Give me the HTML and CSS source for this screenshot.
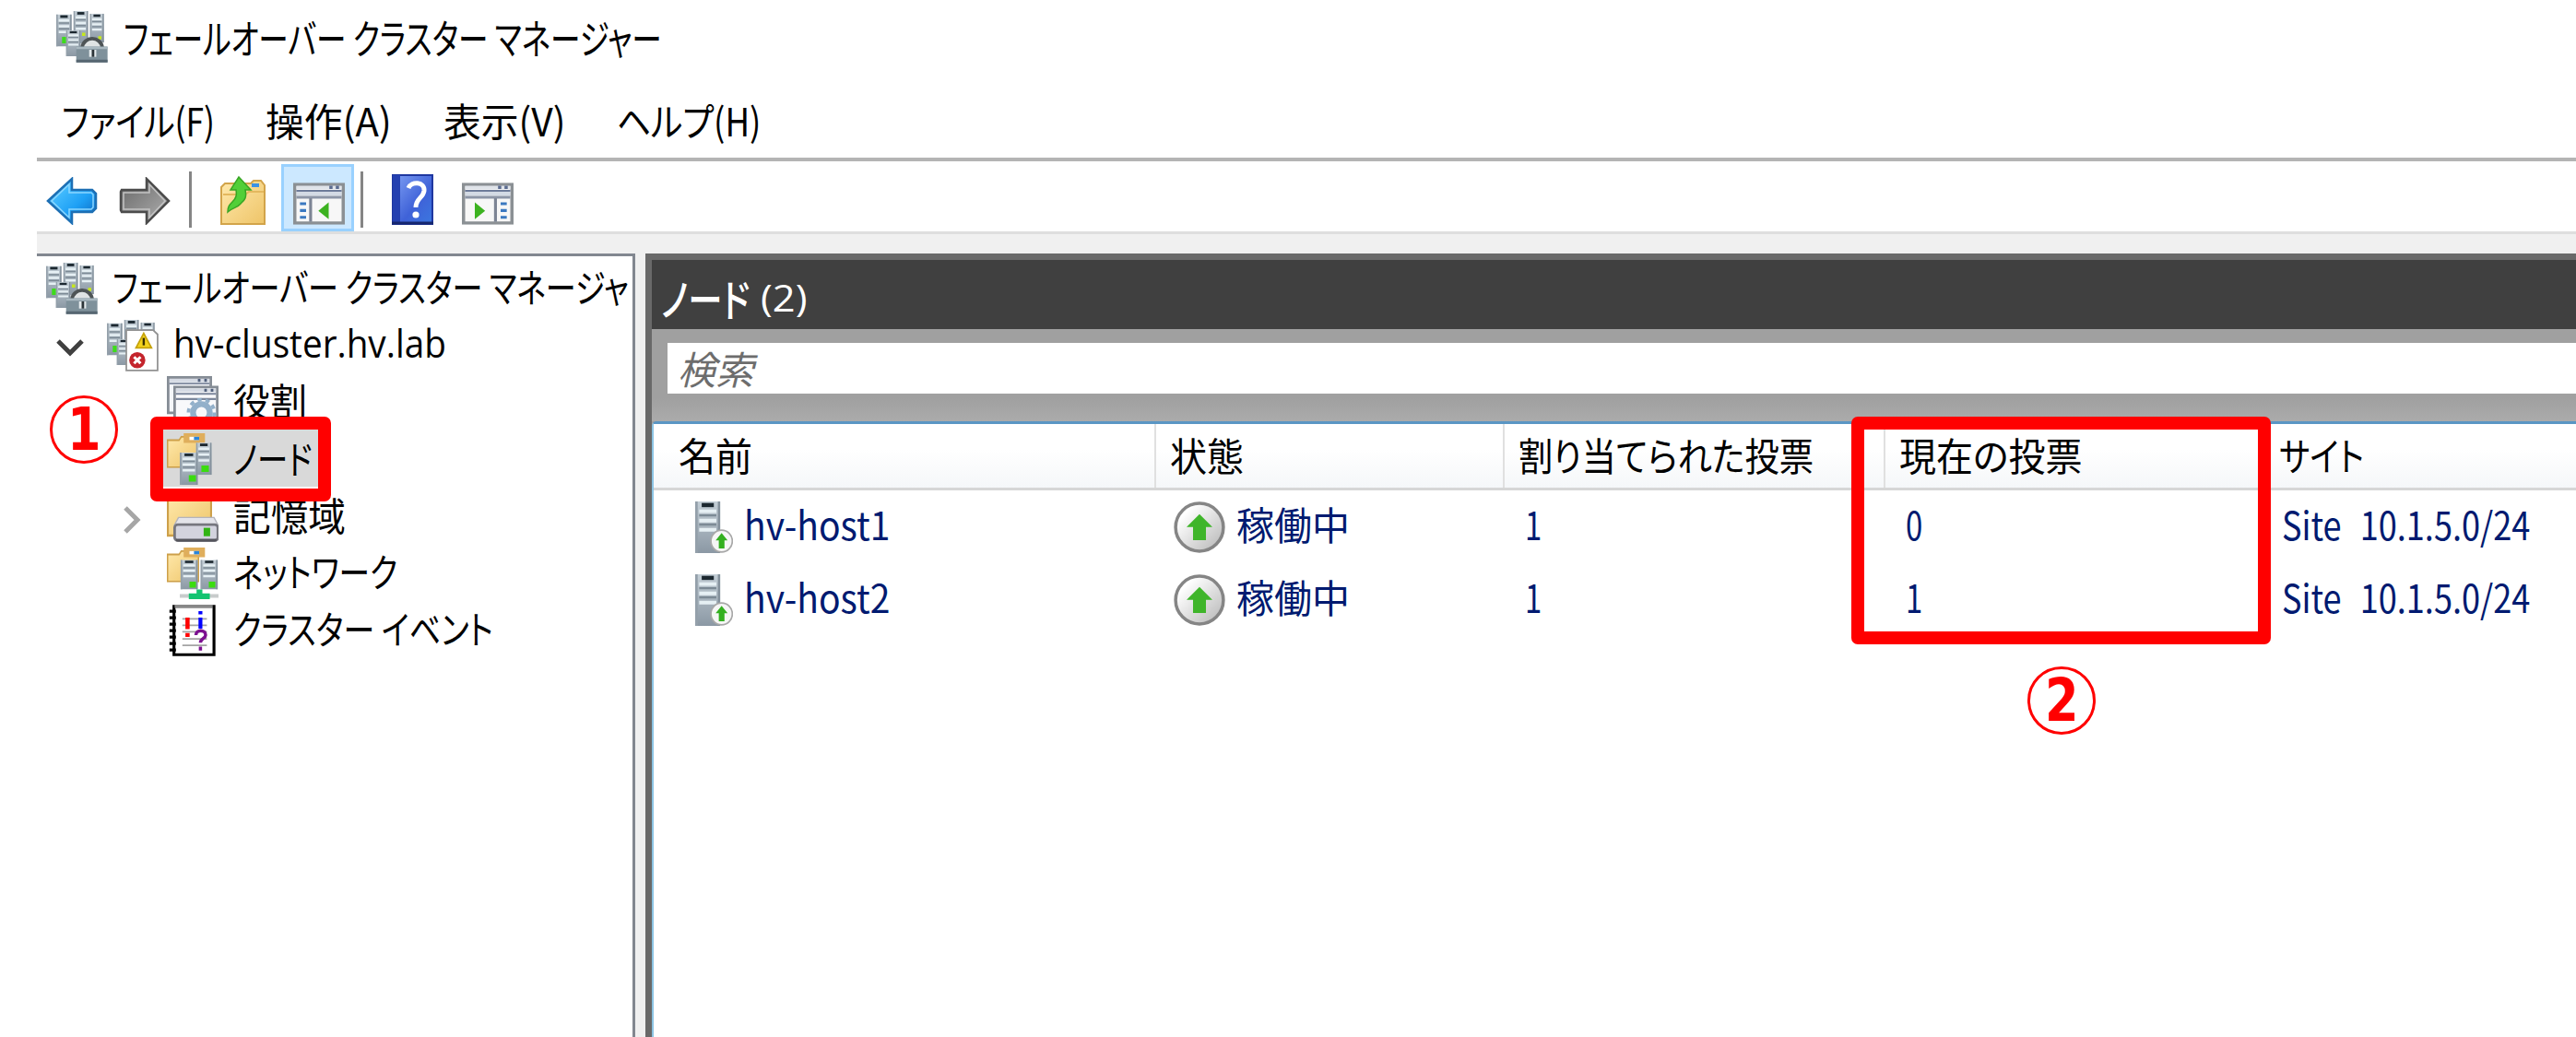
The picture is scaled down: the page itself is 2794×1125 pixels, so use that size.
FILE: index.html
```html
<!DOCTYPE html>
<html lang="ja">
<head>
    <meta charset="UTF-8">
    <title>フェールオーバー クラスター マネージャー</title>
    <link rel="stylesheet" href="styles.css">
</head>
<body>
    <!-- shared icon parts, 16x16 grid -->
    <svg class="sprite" aria-hidden="true">
        <defs>
            <linearGradient id="g-steel" x1="0" y1="0" x2="0" y2="1">
                <stop offset="0" stop-color="#c3ced6"/><stop offset="1" stop-color="#8b98a4"/>
            </linearGradient>
            <linearGradient id="g-folder" x1="0" y1="0" x2="1" y2="1">
                <stop offset="0" stop-color="#ffe9ac"/><stop offset="1" stop-color="#eec468"/>
            </linearGradient>
            <linearGradient id="g-blue" x1="0" y1="0" x2="1" y2="1">
                <stop offset="0.2" stop-color="#4cc2ff"/><stop offset="0.6" stop-color="#1ea0f5"/><stop offset="1" stop-color="#0a62b8"/>
            </linearGradient>
            <linearGradient id="g-grey" x1="0" y1="0" x2="1" y2="1">
                <stop offset="0" stop-color="#666"/><stop offset="1" stop-color="#b0b0b0"/>
            </linearGradient>
            <linearGradient id="g-book" x1="0" y1="0" x2="1" y2="1">
                <stop offset="0" stop-color="#7fa0f4"/><stop offset="0.6" stop-color="#3f62d8"/><stop offset="1" stop-color="#3b78e0"/>
            </linearGradient>
            <linearGradient id="g-disc" x1="0" y1="0" x2="1" y2="1">
                <stop offset="0.2" stop-color="#fff"/><stop offset="1" stop-color="#b4b4b4"/>
            </linearGradient>
        </defs>
        <symbol id="tower" viewBox="0 0 5 10" preserveAspectRatio="none">
            <rect width="5" height="10" fill="url(#g-steel)"/>
            <rect width="0.5" height="10" fill="#94a0aa"/>
            <rect x="4.5" width="0.5" height="10" fill="#84919c"/>
            <rect x="1.3" y="0.3" width="2.4" height="0.8" fill="#1c2830"/>
            <path d="M0.8 1.9h3.4M0.8 3.7h3.4M0.8 5.5h3.4" stroke="#e6f0f4" stroke-width="0.7"/>
            <path d="M0.8 2.7h3.4M0.8 4.5h3.4" stroke="#7c8a95" stroke-width="0.4"/>
        </symbol>
        <symbol id="folder" viewBox="0 0 14 11" preserveAspectRatio="none">
            <path d="M0.3 1.5h5L6.3 0.3h6l0.5 1.2h0.9v9.2H0.3z" fill="url(#g-folder)" stroke="#cda04a" stroke-width="0.6"/>
        </symbol>
        <symbol id="cluster" viewBox="0 0 16 16">
            <use href="#tower" x="0" y="1" width="4.8" height="10"/>
            <rect x="1.8" y="8" width="1.4" height="2" fill="#3ddc1a"/>
            <use href="#tower" x="5.3" y="0" width="4.6" height="10"/>
            <use href="#tower" x="10.4" y="0.8" width="4.4" height="9"/>
            <use href="#tower" x="3" y="6" width="4.6" height="8"/>
            <path d="M8 7.2h1M13 8.3h1" stroke="#c6e81c" stroke-width="1"/>
        </symbol>
        <symbol id="manager" viewBox="0 0 16 16">
            <use href="#cluster" width="16" height="16"/>
            <path d="M8 11.4c0.4-3.8 5.9-3.8 6.3 0" fill="#dfe3e4" stroke="#4e5456" stroke-width="1.1"/>
            <rect x="6.2" y="11" width="9.7" height="4.9" fill="#7f919b"/>
            <path d="M6.2 11.4h9.7" stroke="#a9b8c0" stroke-width="0.7"/>
            <path d="M6.2 15.5h9.7" stroke="#566671" stroke-width="0.8"/>
            <rect x="10.2" y="12" width="2.2" height="2.2" fill="#e6ecee"/>
            <rect x="11" y="12" width="0.8" height="2.2" fill="#2c3438"/>
        </symbol>
        <symbol id="cluster-alert" viewBox="0 0 16 16">
            <use href="#cluster" width="16" height="16"/>
            <path d="M6 3.2h8.3l1.4 1.3v11.2H6z" fill="#fff" stroke="#919191" stroke-width="0.5"/>
            <path d="M11.4 4.2l2.4 4.5H9z" fill="#f4d31c" stroke="#c5a20a" stroke-width="0.5"/>
            <path d="M11.4 5.6v2.3" stroke="#3a3000" stroke-width="0.7"/>
            <circle cx="9.4" cy="12.5" r="2.5" fill="#c4242c"/>
            <path d="M8.4 11.5l2 2m0-2l-2 2" stroke="#fff" stroke-width="0.9"/>
        </symbol>
        <symbol id="roles" viewBox="0 0 16 16">
            <rect x="0.4" y="0.4" width="13.2" height="11" fill="#f4f6f9" stroke="#868d96" stroke-width="0.8"/>
            <path d="M0.8 1.4h12.4" stroke="#d6dbe4" stroke-width="1.1"/>
            <path d="M0.8 2.3h12.4" stroke="#7c879c" stroke-width="0.5"/>
            <rect x="2.4" y="3.4" width="13.2" height="12.2" fill="#f8f9fb" stroke="#868d96" stroke-width="0.8"/>
            <path d="M2.8 4.4h12.4" stroke="#d6dbe4" stroke-width="1.1"/>
            <path d="M2.8 5.5h12.4M2.8 7.1h12.4" stroke="#7c879c" stroke-width="0.6"/>
            <path d="M9.6 1.3h0.8M11.6 1.3h0.8M11.6 4.4h0.8M13.6 4.4h0.8" stroke="#51607c" stroke-width="0.9"/>
            <circle cx="10.7" cy="11.3" r="2.6" fill="none" stroke="#92b0ca" stroke-width="1.8"/>
            <circle cx="10.7" cy="11.3" r="4" fill="none" stroke="#92b0ca" stroke-width="1.1" stroke-dasharray="1.3 1.2"/>
        </symbol>
        <symbol id="nodes" viewBox="0 0 16 16">
            <use href="#folder" x="0" y="0.8" width="10" height="10"/>
            <rect x="5.2" y="0" width="6.6" height="3" fill="#dfae5c"/>
            <path d="M7 1.6h3" stroke="#fff" stroke-width="1"/><path d="M8.4 1.6h1.6" stroke="#2a86dc" stroke-width="1"/>
            <use href="#tower" x="9" y="2.9" width="4.9" height="10"/>
            <rect x="10.7" y="10" width="2.3" height="2" fill="#3bdc10"/>
            <use href="#tower" x="4" y="6" width="5.6" height="10"/>
            <rect x="6.8" y="13" width="2.2" height="2" fill="#3bdc10"/>
        </symbol>
        <symbol id="storage" viewBox="0 0 16 16">
            <use href="#folder" x="0" y="1" width="14" height="13.4"/>
            <path d="M3.6 8.4h11l1.3 2.4H2.3z" fill="#e4e4ea" stroke="#b4b4bc" stroke-width="0.4"/>
            <rect x="2.4" y="10.6" width="13.4" height="5" rx="1" fill="#d3d3de" stroke="#77777f" stroke-width="0.8"/>
            <path d="M2.8 15.4h12.6" stroke="#55555c" stroke-width="0.8"/>
            <rect x="11.4" y="11.6" width="2" height="2.6" fill="#32b414"/>
        </symbol>
        <symbol id="network" viewBox="0 0 16 16">
            <use href="#folder" x="0" y="0.8" width="10" height="10"/>
            <rect x="5.2" y="0" width="6.6" height="3" fill="#dfae5c"/>
            <path d="M7 1.6h3" stroke="#fff" stroke-width="1"/><path d="M8.4 1.6h1.6" stroke="#2a86dc" stroke-width="1"/>
            <use href="#tower" x="4.2" y="3.8" width="5.4" height="9.2"/>
            <use href="#tower" x="10.4" y="3.8" width="5.4" height="9.2"/>
            <path d="M7 11.5h2M13 11.5h2" stroke="#3bdc10" stroke-width="1.8"/>
            <path d="M4 15h12" stroke="#c8cccc" stroke-width="1.2"/>
            <path d="M9.2 13h1.8v1.2h2.3V16H6.8v-1.8h2.4z" fill="#12c470"/>
        </symbol>
        <symbol id="events" viewBox="0 0 16 16">
            <path d="M2.2 0.5h12.4v15H2.2z" fill="#fff" stroke="#000" stroke-width="0.9"/>
            <path d="M2.4 0.5h11.8" stroke="#888" stroke-width="1"/>
            <path d="M1.8 1.6v13.4" stroke="#000" stroke-width="2" stroke-dasharray="0.9 1.1"/>
            <path d="M4.8 4.4h7.6M4.8 6.4h7.6M4.8 8.4h7.6M4.8 10.6h7.6M4.8 12.6h7.6" stroke="#a4a4a4" stroke-width="0.5"/>
            <path d="M6.4 4v3.6M6.4 8.8v1.2" stroke="#f00" stroke-width="1.3"/>
            <path d="M10.4 2v1M10.4 4v3.4" stroke="#00f" stroke-width="1.2"/>
            <path d="M9 9.4c0-1.8 3-1.8 3 0 0 1.1-1.6 1.1-1.6 2.4M10.4 13v1.2" fill="none" stroke="#7c1090" stroke-width="1"/>
        </symbol>
        <symbol id="server-up" viewBox="0 0 12 16" preserveAspectRatio="none">
            <use href="#tower" x="0" y="0" width="8" height="16"/>
            <circle cx="8.4" cy="12.3" r="3.4" fill="#f6f6f6" stroke="#a8a8a8" stroke-width="0.5"/>
            <path d="M8.4 9.8l1.9 2.3H9.3v2.5H7.5v-2.5H6.5z" fill="#34b020"/>
        </symbol>
        <symbol id="up" viewBox="0 0 16 16">
            <circle cx="8" cy="8" r="7.4" fill="url(#g-disc)" stroke="#858585" stroke-width="1"/>
            <path d="M8 3.9l4 4H10V12H6V7.9H4z" fill="#3fb52a"/>
        </symbol>
        <symbol id="pane" viewBox="0 0 16 13">
            <rect x="0.5" y="0.5" width="15" height="12" fill="#f7f7f7" stroke="#8b9094" stroke-width="1"/>
            <path d="M1 1.5h14" stroke="#dfe3e9" stroke-width="1"/>
            <path d="M1 2.5h14" stroke="#6d7b99" stroke-width="0.6"/>
            <path d="M1 3.4h14" stroke="#d3dae4" stroke-width="1.2"/>
            <path d="M1 4.5h14" stroke="#8c95a6" stroke-width="0.8"/>
            <path d="M11.2 1.4h1M13.2 1.4h1" stroke="#5b6b90" stroke-width="1"/>
        </symbol>
    </svg>

    <header class="title-bar">
        <svg class="icon"><use href="#manager"/></svg>
        <h1 class="text t-title">フェールオーバー クラスター マネージャー</h1>
    </header>

    <nav class="menu-bar">
        <span class="text m-file">ファイル(F)</span>
        <span class="text m-action">操作(A)</span>
        <span class="text m-view">表示(V)</span>
        <span class="text m-help">ヘルプ(H)</span>
    </nav>

    <div class="window">
        <div class="toolbar">
            <svg class="tool arrow" viewBox="0 0 56 52"><path d="M2 26L28 2v12h22l4 4v16l-4 4H28v12z" fill="url(#g-blue)" stroke="#1d6fb4" stroke-width="2.5"/><path d="M6 26L25 8v9h24l2 2v14l-2 2H25v9z" fill="none" stroke="#8ad6ff" stroke-width="1.5"/></svg>
            <svg class="tool arrow forward" viewBox="0 0 56 52"><path d="M54 26L30 2v12H3l-1 2v20l1 2h27v12z" fill="url(#g-grey)" stroke="#4c4c4c" stroke-width="2.5"/><path d="M50 26L33 8v9H5v18h28v9z" fill="none" stroke="#c4c4c4" stroke-width="1.5"/></svg>
            <span class="separator"></span>
            <svg class="tool up-folder" viewBox="0 0 49 54">
                <path d="M1 13l4-4h28l3-3h8l4 5v42H1z" fill="url(#g-folder)" stroke="#d2a44a" stroke-width="2"/>
                <path d="M3 21h24l4-3h16" fill="none" stroke="#e4b85e" stroke-width="2"/>
                <path d="M34 11h8" stroke="#3b92e4" stroke-width="4"/>
                <path d="M20 2l13 14h-6c2 9-1 11-5 15-4 5-9 4-14 9 0-6 2-8 5-11 4-4 5-7 4-13h-6z" fill="#51cf38" stroke="#38a524" stroke-width="1.5"/>
            </svg>
            <span class="tool-active">
                <svg class="tool pane" viewBox="0 0 16 13"><use href="#pane" width="16" height="13"/><path d="M5.4 4.8v7.3" stroke="#7c8494" stroke-width="0.9"/><path d="M2.1 6.5h1.9M2.1 8.6h1.9M2.1 10.7h1.9" stroke="#3a78c0" stroke-width="0.9"/><path d="M11 6.1v5.2L7.8 8.7z" fill="#3cb220"/></svg>
            </span>
            <span class="separator second"></span>
            <svg class="tool help" viewBox="0 0 45 55">
                <rect x="1" y="1" width="43" height="53" fill="url(#g-book)" stroke="#1f37a0" stroke-width="2"/>
                <rect x="1" y="1" width="8" height="53" fill="#2440b0"/>
                <path d="M0 53h45" stroke="#16276e" stroke-width="3"/>
                <path d="M18 15c3-8 18-7 17 3-1 8-9 8-9 18" fill="none" stroke="#fff" stroke-width="5"/>
                <circle cx="26" cy="44" r="3.6" fill="#fff"/>
            </svg>
            <svg class="tool pane actions" viewBox="0 0 16 13"><use href="#pane" width="16" height="13"/><path d="M10.4 4.8v7.3" stroke="#7c8494" stroke-width="0.9"/><path d="M12 6.5h1.9M12 8.6h1.9M12 10.7h1.9" stroke="#3a78c0" stroke-width="0.9"/><path d="M4 6.1v5.2l3.2-2.6z" fill="#3cb220"/></svg>
        </div>

        <div class="content">
            <ul class="tree">
                <li class="tree-row root"><svg class="icon"><use href="#manager"/></svg><span class="text t-root">フェールオーバー クラスター マネージャ</span></li>
                <li class="tree-row cluster"><svg class="chevron open" viewBox="0 0 30 20"><path d="M2 3l13 13L28 3" fill="none" stroke="#404040" stroke-width="5"/></svg><svg class="icon"><use href="#cluster-alert"/></svg><span class="text latin t-cluster">hv-cluster.hv.lab</span></li>
                <li class="tree-row child"><svg class="icon"><use href="#roles"/></svg><span class="text t-roles">役割</span></li>
                <li class="tree-row child"><span class="selection"></span><svg class="icon"><use href="#nodes"/></svg><span class="text t-nodes">ノード</span></li>
                <li class="tree-row child"><svg class="chevron closed" viewBox="0 0 20 30"><path d="M3 2l13 13L3 28" fill="none" stroke="#a6a6a6" stroke-width="5"/></svg><svg class="icon"><use href="#storage"/></svg><span class="text t-storage">記憶域</span></li>
                <li class="tree-row child"><svg class="icon"><use href="#network"/></svg><span class="text t-network">ネットワーク</span></li>
                <li class="tree-row child"><svg class="icon"><use href="#events"/></svg><span class="text t-events">クラスター イベント</span></li>
            </ul>

            <main class="pane-main">
                <h2 class="pane-title"><span class="text t-pane">ノード</span><span class="text latin t-count">(2)</span></h2>
                <div class="search-band"><div class="search"><span class="text t-search">検索</span></div></div>
                <div class="list">
                    <div class="list-head">
                        <div class="cell"><span class="text h-name">名前</span></div>
                        <div class="cell"><span class="text h-state">状態</span></div>
                        <div class="cell"><span class="text h-assigned">割り当てられた投票</span></div>
                        <div class="cell"><span class="text h-current">現在の投票</span></div>
                        <div class="cell"><span class="text h-site">サイト</span></div>
                    </div>
                    <div class="list-row">
                        <div class="cell name"><svg class="server"><use href="#server-up"/></svg><span class="text t-host">hv-host1</span></div>
                        <div class="cell state"><svg class="icon"><use href="#up"/></svg><span class="text t-state">稼働中</span></div>
                        <div class="cell num"><span class="text t-num">1</span></div>
                        <div class="cell num"><span class="text t-num">0</span></div>
                        <div class="cell site"><span class="text t-site">Site 10.1.5.0/24</span></div>
                    </div>
                    <div class="list-row">
                        <div class="cell name"><svg class="server"><use href="#server-up"/></svg><span class="text t-host">hv-host2</span></div>
                        <div class="cell state"><svg class="icon"><use href="#up"/></svg><span class="text t-state">稼働中</span></div>
                        <div class="cell num"><span class="text t-num">1</span></div>
                        <div class="cell num"><span class="text t-num">1</span></div>
                        <div class="cell site"><span class="text t-site">Site 10.1.5.0/24</span></div>
                    </div>
                </div>
            </main>
        </div>
    </div>

    <!-- callouts -->
    <div class="callout callout-node"></div>
    <div class="callout callout-vote"></div>
    <div class="step step-one"><span>1</span></div>
    <div class="step step-two"><span>2</span></div>
</body>
</html>
```
FILE: styles.css
```css
* {
    box-sizing: border-box;
}
body {
    margin: 0;
    height: 1125px;
    overflow: hidden;
    position: relative;
    display: flex;
    flex-direction: column;
    background: #fff;
    color: #000;
    font-family: "Noto Sans CJK JP", sans-serif;
    font-size: 42px;
    font-feature-settings: "palt";
}
h1, h2, ul {
    margin: 0;
    padding: 0;
    font-size: inherit;
    font-weight: normal;
    list-style: none;
}
.sprite {
    position: absolute;
    width: 0;
    height: 0;
}
.text {
    display: inline-block;
    white-space: nowrap;
    line-height: 60px;
    transform-origin: left;
}
.latin {
    font-family: "Open Sans", sans-serif;
}
.icon {
    width: 56px;
    height: 56px;
    flex: none;
}

/* condensed UI lettering */
.t-title { transform: scaleX(0.741); }
.m-file { transform: scaleX(0.843); }
.m-action { transform: scaleX(0.993); }
.m-view { transform: scaleX(0.971); }
.m-help { transform: scaleX(0.872); }
.t-root { transform: scaleX(0.788); }
.t-cluster { transform: scaleX(0.922); }
.t-roles { transform: scaleX(0.952); }
.t-nodes { transform: scaleX(0.796); }
.t-storage { transform: scaleX(0.968); }
.t-network { transform: scaleX(0.802); }
.t-events { transform: scaleX(0.81); }
.t-pane { transform: scaleX(0.78); }
.t-count { transform: scaleX(1.06); }
.t-search { transform: scaleX(0.98); }
.h-name, .h-state, .h-current { transform: scaleX(0.952); }
.h-assigned { transform: scaleX(0.889); }
.h-site { transform: scaleX(0.844); }
.t-host { transform: scaleX(0.929); }
.t-state { transform: scaleX(0.976); }
.t-num { transform: scaleX(0.783); }
.t-site { transform: scaleX(0.86); }

/* title and menu */
.title-bar {
    height: 82px;
    padding: 0 0 2px 61px;
    display: flex;
    align-items: center;
    gap: 17px;
}
.title-bar .text {
    font-size: 44px;
}
.menu-bar {
    height: 89px;
    padding: 18px 0 0 67px;
    display: grid;
    grid-template-columns: 221px 193px 188px 200px;
}
.menu-bar .text {
    justify-self: start;
}

/* toolbar */
.window {
    flex: 1;
    min-height: 0;
    margin-left: 40px;
    display: flex;
    flex-direction: column;
    background: #f0f0f0;
}
.toolbar {
    height: 83px;
    display: flex;
    align-items: flex-end;
    padding: 0 0 0 10px;
    background: #fff;
    border-top: 4px solid #b4b4b4;
    border-bottom: 3px solid #dedede;
}
.tool {
    display: block;
    flex: none;
    margin-bottom: 7px;
}
.arrow {
    width: 56px;
    height: 52px;
}
.forward {
    margin-left: 23px;
}
.separator {
    width: 3px;
    height: 61px;
    margin: 0 31px 4px 20px;
    background: #858585;
}
.separator.second {
    margin: 0 31px 4px 7px;
}
.up-folder {
    width: 49px;
    height: 54px;
}
.tool-active {
    width: 79px;
    height: 73px;
    margin-left: 17px;
    padding: 17px 0 0 10px;
    background: #cce8ff;
    border: 3px solid #99d1ff;
}
.pane {
    width: 56px;
    height: 46px;
}
.help {
    width: 45px;
    height: 55px;
}
.actions {
    margin-left: 31px;
}

/* console tree */
.content {
    flex: 1;
    min-height: 0;
    display: flex;
    padding-top: 21px;
}
.tree {
    width: 649px;
    flex: none;
    background: #fff;
    border-top: 3px solid #828790;
    border-right: 3px solid #828790;
    padding-top: 4px;
    overflow: hidden;
}
.tree-row {
    position: relative;
    height: 61.8px;
    display: flex;
    align-items: center;
    gap: 16px;
}
.root {
    padding-left: 10px;
}
.cluster {
    padding-left: 76px;
}
.child {
    padding-left: 141px;
}
.chevron {
    position: absolute;
}
.open {
    left: 21px;
    top: 23px;
    width: 30px;
    height: 20px;
}
.closed {
    left: 93px;
    top: 20px;
    width: 20px;
    height: 30px;
}
.selection {
    position: absolute;
    left: 137px;
    top: -1px;
    width: 168px;
    height: 62px;
    background: #d9d9d9;
}
.tree-row .icon, .tree-row .text {
    position: relative;
}
.tree-row .text {
    padding-bottom: 5px;
}

/* node pane */
.pane-main {
    flex: 1;
    min-width: 0;
    margin-left: 11px;
    border-left: 7px solid #696969;
    border-top: 7px solid #696969;
    display: flex;
    flex-direction: column;
    background: #a0a0a0;
}
.pane-title {
    height: 75px;
    padding: 4px 0 0 10px;
    display: flex;
    align-items: center;
    background: #404040;
    color: #fff;
}
.t-pane {
    width: 108px;
    font-size: 48px;
    font-weight: 500;
}
.t-count {
    font-size: 41px;
}
.search-band {
    height: 100px;
    padding: 15px 0 0 17px;
    background: linear-gradient(#a0a0a0 75%, #ababab);
}
.search {
    height: 55px;
    padding: 0 0 2px 11px;
    display: flex;
    align-items: center;
    background: #fff;
    color: #6d6d6d;
    font-style: italic;
}
.list {
    flex: 1;
    background: #fff;
    border-top: 3px solid #5a96c4;
    border-left: 2px solid #8cc4e4;
    border-top-left-radius: 5px;
}
.list-head, .list-row {
    display: grid;
    grid-template-columns: 545px 378px 413px 412px 1fr;
}
.list-head {
    height: 72px;
    background: linear-gradient(#fff 40%, #f5f7f9);
    border-bottom: 3px solid #d6d6d6;
}
.list-head .cell {
    padding: 0 0 3px 15px;
    border-right: 2px solid #e0e0e0;
}
.list-head .cell:first-child {
    padding-left: 27px;
}
.list-head .cell:last-child {
    border-right: none;
}
.list-row {
    height: 79.3px;
    color: #001a70;
}
.cell {
    display: flex;
    align-items: center;
}
.list-row .text {
    padding-bottom: 7px;
}
.server {
    width: 41px;
    height: 56px;
    margin: 0 12px 0 45px;
}
.state {
    padding-left: 19px;
    gap: 12px;
}
.num {
    padding-left: 22px;
}
.site {
    padding-left: 18px;
}
.t-site {
    word-spacing: 14px;
}

/* callouts over the window */
.callout {
    position: absolute;
    border: 14px solid #f00;
    border-radius: 7px;
}
.callout-node {
    left: 163px;
    top: 452px;
    width: 196px;
    height: 92px;
}
.callout-vote {
    left: 2008px;
    top: 452px;
    width: 455px;
    height: 247px;
}
.step {
    position: absolute;
    width: 74px;
    height: 74px;
    display: flex;
    align-items: center;
    justify-content: center;
    border: 3px solid #f00;
    border-radius: 50%;
    color: #f00;
    font: bold 64px/68px "DejaVu Sans", sans-serif;
}
.step span {
    transform: scaleX(0.82);
}
.step-one {
    left: 54px;
    top: 429px;
}
.step-two {
    left: 2199px;
    top: 723px;
}
```
